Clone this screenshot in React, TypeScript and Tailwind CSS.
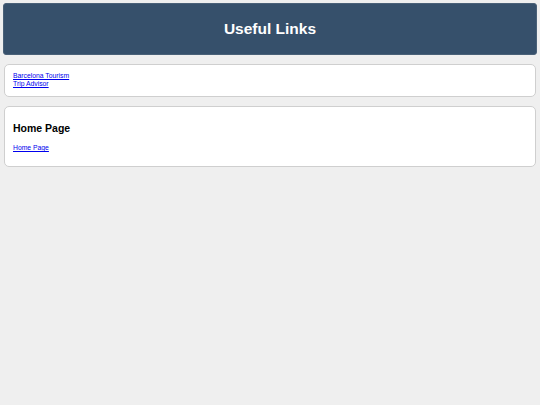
export default function App() {
  return (
    <div className="min-h-[405px] bg-[#efefef] p-[3px] font-['Liberation_Sans',Arial,sans-serif]">
      <header className="h-[52px] rounded-[3px] bg-[#36506b] border border-[#4a6178] flex items-center justify-center">
        <h1 className="text-[15.5px] font-bold text-white">Useful Links</h1>
      </header>
      <div className="mx-px mt-[9px] rounded-[5px] border border-[#cfcfcf] bg-white pl-[8px] pr-2 pt-[7px] pb-[8px] flex flex-col text-[6.8px] leading-[8px]">
        <a href="#" className="text-[#0000ee] underline w-fit">Barcelona Tourism</a>
        <a href="#" className="text-[#0000ee] underline w-fit">Trip Advisor</a>
      </div>
      <div className="mx-px mt-[9px] rounded-[5px] border border-[#cfcfcf] bg-white pl-[8px] pr-2 pt-[15px] pb-[14px]">
        <h2 className="text-[10.5px] font-bold text-black leading-[13px]">Home Page</h2>
        <a href="#" className="mt-[9px] block w-fit text-[6.8px] leading-[8px] text-[#0000ee] underline">Home Page</a>
      </div>
    </div>
  );
}
